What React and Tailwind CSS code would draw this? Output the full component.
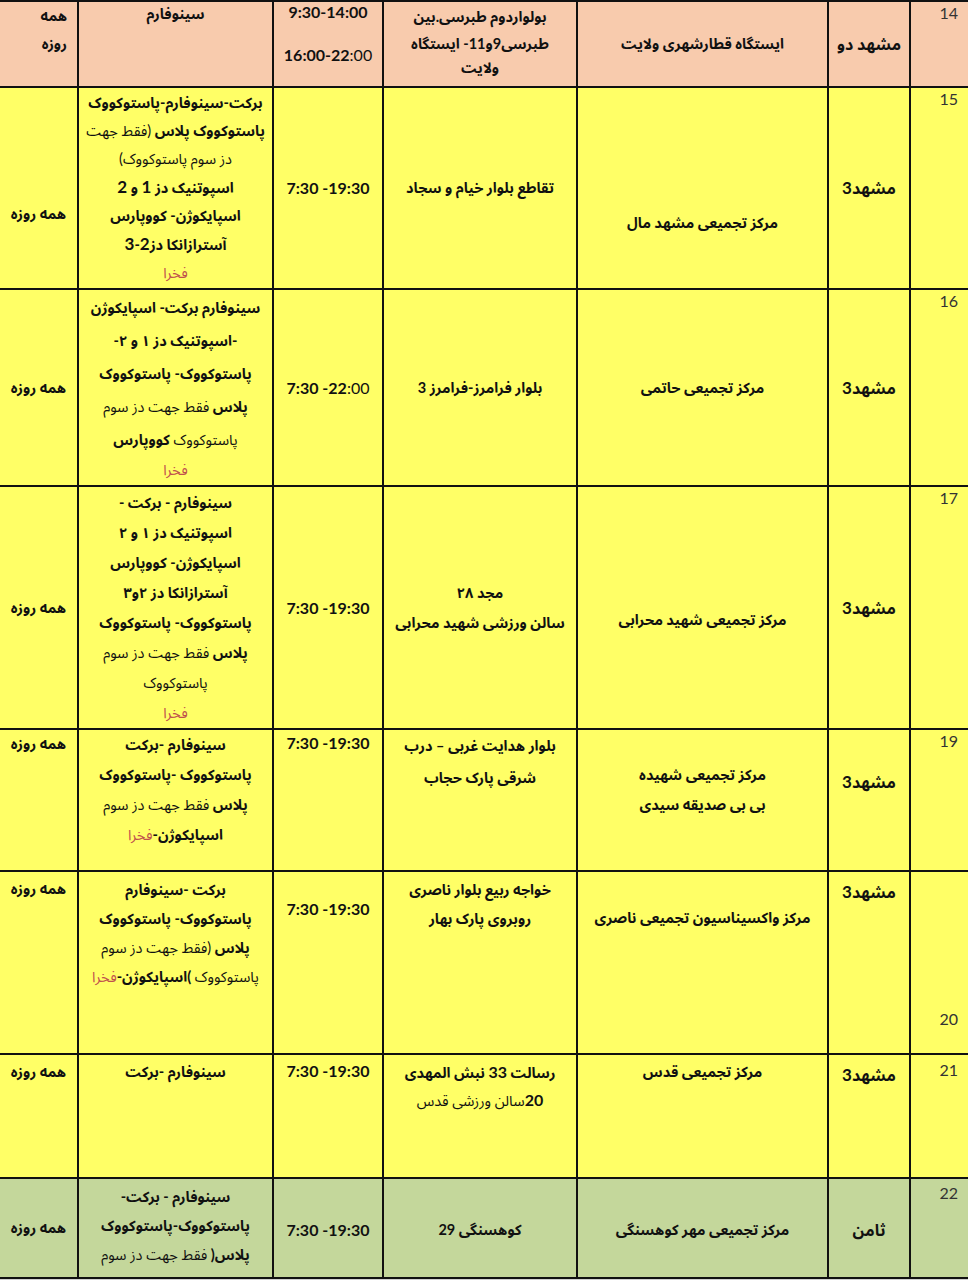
import React from "react";

const B = ({ children, className = "" }) => <span className={"font-bold " + className}>{children}</span>;
const N = ({ children, className = "" }) => <span className={"font-normal " + className}>{children}</span>;
const R = ({ children }) => <span className="font-normal text-[#c0504d]">{children}</span>;
const L = ({ children, className = "" }) => <div className={"whitespace-nowrap " + className}>{children}</div>;

const cell = "border-2 border-[#111] p-0 text-center";

function NumCell({ children, bottom }) {
  return (
    <td className={cell + " border-r-0 " + (bottom ? "align-bottom" : "align-top")}>
      <div className={"text-right pr-[10px] font-normal text-[16px] text-[#333] leading-[20px] " + (bottom ? "pb-[24px]" : "pt-[1px]")}>
        {children}
      </div>
    </td>
  );
}

function Dist({ children, top, pt = "" }) {
  return (
    <td className={cell + (top ? " align-top" : " align-middle")}>
      <div className={"font-bold text-[16px] leading-[24px] " + pt}>{children}</div>
    </td>
  );
}

const M3 = () => (
  <span>
    مشهد<span className="font-bold text-[17px]">3</span>
  </span>
);

export default function App() {
  const base = "font-['Lato','Noto_Sans_Arabic','DejaVu_Sans',sans-serif] text-[14.5px] text-[#111] font-bold";
  return (
    <div className="w-[968px] h-[1280px] overflow-hidden bg-[#d0d0d0]">
      <table dir="rtl" className={"table-fixed border-collapse w-[968px] " + base}>
        <colgroup>
          <col className="w-[58px]" />
          <col className="w-[82px]" />
          <col className="w-[251px]" />
          <col className="w-[194px]" />
          <col className="w-[110px]" />
          <col className="w-[195px]" />
          <col className="w-[78px]" />
        </colgroup>
        <tbody>
          {/* 14 */}
          <tr className="h-[86px] bg-[#f8cbad]">
            <NumCell>14</NumCell>
            <Dist>مشهد دو</Dist>
            <td className={cell + " align-middle"}>
              <L className="leading-[24px]">ایستگاه قطارشهری ولایت</L>
            </td>
            <td className={cell + " align-top"}>
              <div className="leading-[27px] pt-[1px]">
                <L>بولواردوم طبرسی.بین</L>
                <L>طبرسی9و11- ایستگاه</L>
                <L className="leading-[22px]">ولایت</L>
              </div>
            </td>
            <td className={cell + " align-top"}>
              <div dir="ltr" className="text-[16px]">
                <div className="leading-[20px]">9:30-14:00</div>
                <div className="leading-[20px] mt-[23px]">
                  16:00-22<span className="font-normal">:00</span>
                </div>
              </div>
            </td>
            <td className={cell + " align-top"}>
              <L className="leading-[24px]">سینوفارم</L>
            </td>
            <td className={cell + " border-l-0 align-top"}>
              <div className="text-right pr-[10px] leading-[28px]">
                <div>همه</div>
                <div>روزه</div>
              </div>
            </td>
          </tr>

          {/* 15 */}
          <tr className="h-[202px] bg-[#ffff66]">
            <NumCell>15</NumCell>
            <Dist>
              <M3 />
            </Dist>
            <td className={cell + " align-middle"}>
              <L className="leading-[24px] pt-[70px]">مرکز تجمیعی مشهد مال</L>
            </td>
            <td className={cell + " align-middle"}>
              <L className="leading-[24px]">تقاطع بلوار خیام و سجاد</L>
            </td>
            <td className={cell + " align-middle"}>
              <div dir="ltr" className="text-[16px] leading-[24px]">7:30 -19:30</div>
            </td>
            <td className={cell + " align-middle"}>
              <div className="leading-[28px]">
                <L>برکت-سینوفارم-پاستوکووک</L>
                <L>
                  پاستوکووک پلاس <N>(فقط جهت</N>
                </L>
                <L>
                  <N>دز سوم پاستوکووک)</N>
                </L>
                <L>
                  اسپوتنیک دز <span className="text-[17px]">1</span> و <span className="text-[17px]">2</span>
                </L>
                <L>اسپایکوژن- کووپارس</L>
                <L>
                  آسترازانکا دز<span className="text-[17px]">2</span>-<span className="text-[17px]">3</span>
                </L>
                <L>
                  <R>فخرا</R>
                </L>
              </div>
            </td>
            <td className={cell + " border-l-0 align-middle"}>
              <L className="leading-[24px] pt-[52px]">همه روزه</L>
            </td>
          </tr>

          {/* 16 */}
          <tr className="h-[197px] bg-[#ffff66]">
            <NumCell>16</NumCell>
            <Dist>
              <M3 />
            </Dist>
            <td className={cell + " align-middle"}>
              <L className="leading-[24px]">مرکز تجمیعی حاتمی</L>
            </td>
            <td className={cell + " align-middle"}>
              <L className="leading-[24px]">بلوار فرامرز-فرامرز 3</L>
            </td>
            <td className={cell + " align-middle"}>
              <div dir="ltr" className="text-[16px] leading-[24px]">
                7:30 -22<span className="font-normal">:00</span>
              </div>
            </td>
            <td className={cell + " align-middle"}>
              <div className="leading-[33px]">
                <L>سینوفارم برکت- اسپایکوژن</L>
                <L>-اسپوتنیک دز ۱ و ۲-</L>
                <L>پاستوکووک- پاستوکووک</L>
                <L>
                  پلاس <N>فقط جهت دز سوم</N>
                </L>
                <L>
                  <N>پاستوکووک</N> کووپارس
                </L>
                <L className="leading-[28px]">
                  <R>فخرا</R>
                </L>
              </div>
            </td>
            <td className={cell + " border-l-0 align-middle"}>
              <L className="leading-[24px]">همه روزه</L>
            </td>
          </tr>

          {/* 17 */}
          <tr className="h-[243px] bg-[#ffff66]">
            <NumCell>17</NumCell>
            <Dist>
              <M3 />
            </Dist>
            <td className={cell + " align-middle"}>
              <L className="leading-[24px] pt-[24px]">مرکز تجمیعی شهید محرابی</L>
            </td>
            <td className={cell + " align-middle"}>
              <div className="leading-[30px]">
                <L>مجد ۲۸</L>
                <L>سالن ورزشی شهید محرابی</L>
              </div>
            </td>
            <td className={cell + " align-middle"}>
              <div dir="ltr" className="text-[16px] leading-[24px]">7:30 -19:30</div>
            </td>
            <td className={cell + " align-middle"}>
              <div className="leading-[30px]">
                <L>سینوفارم - برکت -</L>
                <L>اسپوتنیک دز ۱ و ۲</L>
                <L>اسپایکوژن- کووپارس</L>
                <L>آسترازانکا دز ۲و۳</L>
                <L>پاستوکووک- پاستوکووک</L>
                <L>
                  پلاس <N>فقط جهت دز سوم</N>
                </L>
                <L>
                  <N>پاستوکووک</N>
                </L>
                <L>
                  <R>فخرا</R>
                </L>
              </div>
            </td>
            <td className={cell + " border-l-0 align-middle"}>
              <L className="leading-[24px]">همه روزه</L>
            </td>
          </tr>

          {/* 19 */}
          <tr className="h-[142px] bg-[#ffff66]">
            <NumCell>19</NumCell>
            <Dist top pt="pt-[40px]">
              <M3 />
            </Dist>
            <td className={cell + " align-top"}>
              <div className="leading-[30px] pt-[30px]">
                <L>مرکز تجمیعی شهیده</L>
                <L>بی بی صدیقه سیدی</L>
              </div>
            </td>
            <td className={cell + " align-top"}>
              <div className="leading-[32px] pt-[0px]">
                <L>بلوار هدایت غربی – درب</L>
                <L>شرقی پارک حجاب</L>
              </div>
            </td>
            <td className={cell + " align-top"}>
              <div dir="ltr" className="text-[16px] leading-[26px]">7:30 -19:30</div>
            </td>
            <td className={cell + " align-top"}>
              <div className="leading-[30px]">
                <L>سینوفارم -برکت</L>
                <L>پاستوکووک -پاستوکووک</L>
                <L>
                  پلاس <N>فقط جهت دز سوم</N>
                </L>
                <L>
                  اسپایکوژن-<R>فخرا</R>
                </L>
              </div>
            </td>
            <td className={cell + " border-l-0 align-top"}>
              <L className="leading-[28px]">همه روزه</L>
            </td>
          </tr>

          {/* 20 */}
          <tr className="h-[183px] bg-[#ffff66]">
            <NumCell bottom>20</NumCell>
            <Dist top pt="pt-[8px]">
              <M3 />
            </Dist>
            <td className={cell + " align-top"}>
              <L className="leading-[24px] pt-[34px]">مرکز واکسیناسیون تجمیعی ناصری</L>
            </td>
            <td className={cell + " align-top"}>
              <div className="leading-[29px] pt-[3px]">
                <L>خواجه ربیع بلوار ناصری</L>
                <L>روبروی پارک بهار</L>
              </div>
            </td>
            <td className={cell + " align-top"}>
              <div dir="ltr" className="text-[16px] leading-[24px] pt-[25px]">7:30 -19:30</div>
            </td>
            <td className={cell + " align-top"}>
              <div className="leading-[29px] pt-[3px]">
                <L>برکت -سینوفارم</L>
                <L>پاستوکووک- پاستوکووک</L>
                <L>
                  پلاس <N>(فقط جهت دز سوم</N>
                </L>
                <L>
                  <N>پاستوکووک</N> )اسپایکوژن-<R>فخرا</R>
                </L>
              </div>
            </td>
            <td className={cell + " border-l-0 align-top"}>
              <L className="leading-[28px] pt-[3px]">همه روزه</L>
            </td>
          </tr>

          {/* 21 */}
          <tr className="h-[124px] bg-[#ffff66]">
            <NumCell>
              <div className="pt-[4px]">21</div>
            </NumCell>
            <Dist top pt="pt-[8px]">
              <M3 />
            </Dist>
            <td className={cell + " align-top"}>
              <L className="leading-[28px] pt-[3px]">مرکز تجمیعی قدس</L>
            </td>
            <td className={cell + " align-top"}>
              <div className="leading-[27px] pt-[3px]">
                <L>
                  رسالت <span className="text-[16px]">33</span> نبش المهدی
                </L>
                <L>
                  <span className="text-[16px]">20</span>
                  <N>سالن ورزشی قدس</N>
                </L>
              </div>
            </td>
            <td className={cell + " align-top"}>
              <div dir="ltr" className="text-[16px] leading-[28px] pt-[2px]">7:30 -19:30</div>
            </td>
            <td className={cell + " align-top"}>
              <L className="leading-[28px] pt-[3px]">سینوفارم -برکت</L>
            </td>
            <td className={cell + " border-l-0 align-top"}>
              <L className="leading-[28px] pt-[3px]">همه روزه</L>
            </td>
          </tr>

          {/* 22 */}
          <tr className="h-[100px] bg-[#c4d79b]">
            <NumCell>
              <div className="pt-[3px]">22</div>
            </NumCell>
            <Dist>
              <div className="pt-[4px]">ثامن</div>
            </Dist>
            <td className={cell + " align-middle"}>
              <L className="leading-[24px] pt-[4px]">مرکز تجمیعی مهر کوهسنگی</L>
            </td>
            <td className={cell + " align-middle"}>
              <L className="leading-[24px] pt-[4px]">کوهسنگی 29</L>
            </td>
            <td className={cell + " align-middle"}>
              <div dir="ltr" className="text-[16px] leading-[24px] pt-[4px]">7:30 -19:30</div>
            </td>
            <td className={cell + " align-middle"}>
              <div className="leading-[29px] pb-[6px]">
                <L>سینوفارم - برکت-</L>
                <L>پاستوکووک-پاستوکووک</L>
                <L>
                  پلاس( <N>فقط جهت دز سوم</N>
                </L>
              </div>
            </td>
            <td className={cell + " border-l-0 align-middle"}>
              <L className="leading-[24px]">همه روزه</L>
            </td>
          </tr>
        </tbody>
      </table>
    </div>
  );
}
